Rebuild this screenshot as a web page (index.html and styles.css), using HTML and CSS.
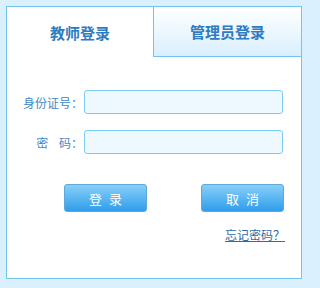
FILE: index.html
```html
<!DOCTYPE html>
<html lang="zh">
<head>
<meta charset="utf-8">
<link rel="stylesheet" href="styles.css">
</head>
<body>
<div class="panel">
  <div class="tabs">
    <div class="tab active">教师登录</div>
    <div class="tab">管理员登录</div>
  </div>
  <div class="form">
    <div class="row">
      <label class="label">身份证号：</label>
      <input class="input" type="text">
    </div>
    <div class="row">
      <label class="label">密&nbsp;&nbsp;&nbsp;&nbsp;码：</label>
      <input class="input" type="password">
    </div>
    <div class="buttons">
      <button class="btn">登录</button>
      <button class="btn">取消</button>
    </div>
    <div class="links">
      <a class="forgot" href="#">忘记密码？</a>
    </div>
  </div>
</div>
</body>
</html>
```
FILE: styles.css
```css
html, body {
  margin: 0;
  padding: 0;
}
body {
  background: #dbf0fe;
  font-family: "Noto Sans CJK SC", "Noto Sans", sans-serif;
  width: 311px;
  height: 288px;
  overflow: hidden;
}
.panel {
  margin: 6px;
  width: 294px;
  height: 271px;
  border: 1px solid #74c4f2;
  background: #fff;
}
.tabs {
  display: flex;
  height: 50px;
}
.tab {
  display: flex;
  align-items: center;
  justify-content: center;
  font-size: 15px;
  font-weight: bold;
  color: #2f7bbf;
  box-sizing: border-box;
}
.tab.active {
  width: 146px;
  background: #fff;
}
.tab:not(.active) {
  width: 148px;
  border-left: 1px solid #74c4f2;
  border-bottom: 1px solid #74c4f2;
  background: linear-gradient(#ffffff, #d9effd);
}
.form {
  padding-top: 33px;
}
.row {
  display: flex;
  align-items: center;
  margin-bottom: 16px;
}
.label {
  width: 76px;
  text-align: right;
  margin-right: 1px;
  font-size: 12px;
  color: #3f87c6;
  white-space: nowrap;
}
.input {
  width: 199px;
  height: 24px;
  box-sizing: border-box;
  border: 1px solid #7ccbf5;
  border-radius: 3px;
  background: #eef8ff;
  margin: 0;
  padding: 0 4px;
  outline: none;
}
.buttons {
  display: flex;
  gap: 54px;
  padding-left: 57px;
  margin-top: 30px;
}
.btn {
  width: 83px;
  height: 28px;
  box-sizing: border-box;
  border: 1px solid #5ea9da;
  border-radius: 3px;
  background: linear-gradient(#88cff9, #2f9eea);
  color: #fff;
  font-family: "Noto Sans CJK SC", sans-serif;
  font-size: 13px;
  letter-spacing: 7px;
  padding: 0 0 0 7px;
  margin: 0;
}
.links {
  display: flex;
  justify-content: flex-end;
  padding-right: 16px;
  margin-top: 16px;
}
.forgot {
  font-size: 12px;
  color: #2d6ca8;
  text-decoration: underline;
  line-height: 14px;
}
```
